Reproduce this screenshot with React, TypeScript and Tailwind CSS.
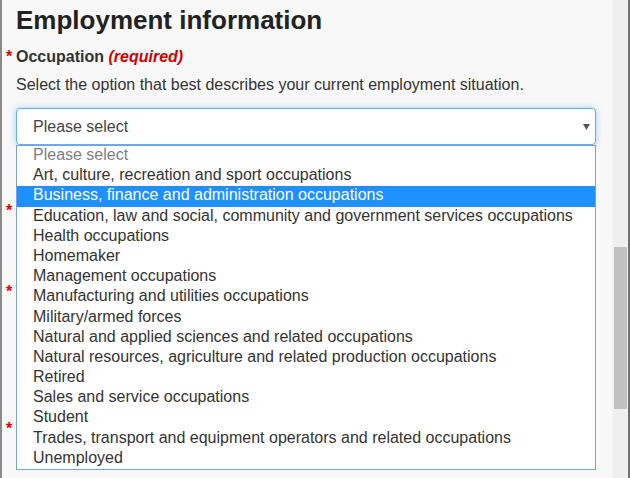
import React from "react";

const options = [
  "Please select",
  "Art, culture, recreation and sport occupations",
  "Business, finance and administration occupations",
  "Education, law and social, community and government services occupations",
  "Health occupations",
  "Homemaker",
  "Management occupations",
  "Manufacturing and utilities occupations",
  "Military/armed forces",
  "Natural and applied sciences and related occupations",
  "Natural resources, agriculture and related production occupations",
  "Retired",
  "Sales and service occupations",
  "Student",
  "Trades, transport and equipment operators and related occupations",
  "Unemployed",
];

function Asterisk() {
  return (
    <span className="inline-block -ml-[10px] w-[10px] text-[#e00000] font-bold">*</span>
  );
}

export default function App() {
  return (
    <div
      className="flex w-[630px] h-[478px] overflow-hidden bg-[#f8f8f8] text-[#333] text-[16px]"
      style={{ fontFamily: '"Liberation Sans", Arial, sans-serif' }}
    >
      <div className="relative flex-1 border-l-2 border-[#8a8a8a] pl-[14px] pt-[5px]">
        <h1 className="text-[26px] leading-[30px] font-bold text-[#222]">Employment information</h1>
        <div className="mt-[11.5px] leading-[20px] font-bold">
          <Asterisk />
          Occupation <span className="italic text-[#d00000]">(required)</span>
        </div>
        <p className="mt-[8px] leading-[20px]">
          Select the option that best describes your current employment situation.
        </p>
        <div className="relative z-10 mt-[13.5px] w-[580px]">
          <div className="flex h-[37px] items-center rounded-[4px] border border-[#66afe9] bg-white pl-[16px] shadow-[0_0_6px_rgba(102,175,233,0.6)]">
            <span className="leading-[20px] text-[#444]">Please select</span>
            <svg className="ml-auto mr-[5px]" width="7" height="6" viewBox="0 0 7 6">
              <polygon points="0,0 7,0 3.5,6" fill="#555" />
            </svg>
          </div>
          <div className="absolute left-0 top-[37px] w-[580px] border border-[#7a9fd8] bg-white">
            {options.map((o, i) => (
              <div
                key={o}
                className={
                  i === 2
                    ? "h-[20.2px] pl-[16px] leading-[17px] pb-[3.2px] whitespace-nowrap bg-[#1e90ff] text-white"
                    : i === 0
                    ? "h-[20.2px] pl-[16px] leading-[17px] pb-[3.2px] whitespace-nowrap text-[#808080]"
                    : "h-[20.2px] pl-[16px] leading-[17px] pb-[3.2px] whitespace-nowrap text-[#333]"
                }
              >
                {o}
              </div>
            ))}
          </div>
        </div>
        <div className="mt-[55.5px] h-[20px] leading-[20px] font-bold">
          <Asterisk />
        </div>
        <div className="mt-[61px] h-[20px] leading-[20px] font-bold">
          <Asterisk />
        </div>
        <div className="mt-[117px] h-[20px] leading-[20px] font-bold">
          <Asterisk />
        </div>
      </div>
      <div className="w-[16px] bg-[#efefef] border-l border-[#f4f4f4] pl-[1px]">
        <div className="mt-[247px] h-[162px] w-[13px] bg-[#c1c1c1]" />
      </div>
      <div className="w-[2px] bg-[#707070]" />
    </div>
  );
}
